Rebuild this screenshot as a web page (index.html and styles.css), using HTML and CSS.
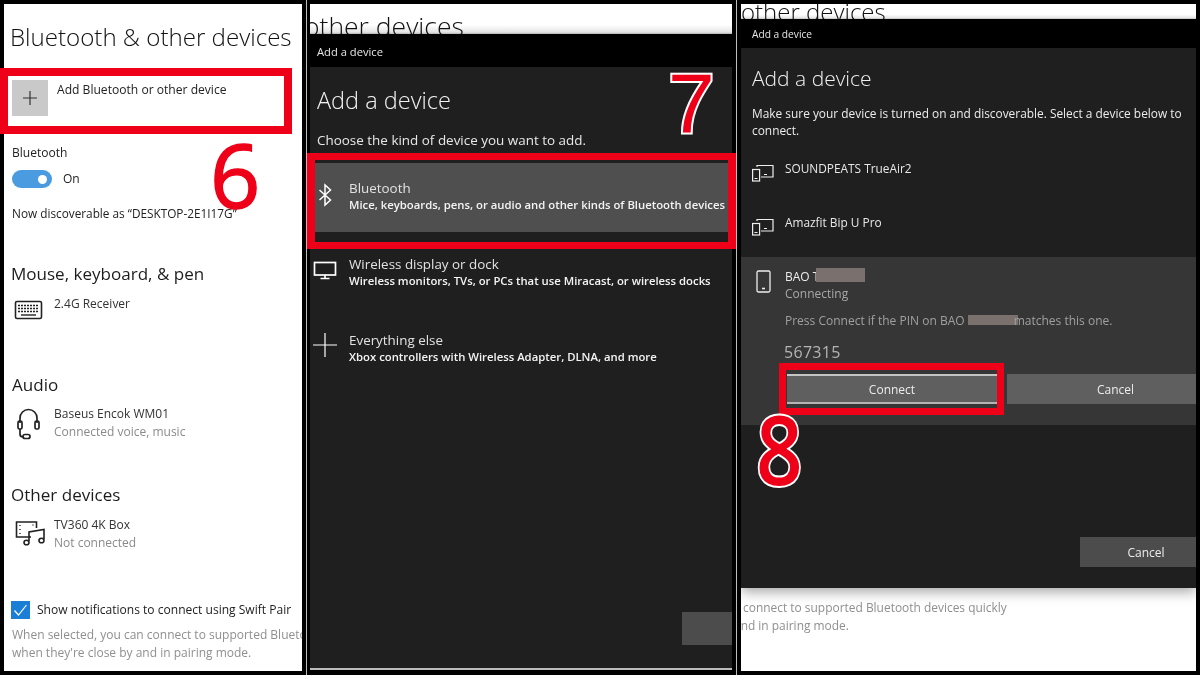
FILE: index.html
```html
<!DOCTYPE html>
<html lang="en">
<head>
<meta charset="utf-8">
<title>Add a Bluetooth device</title>
<link rel="stylesheet" href="styles.css">
</head>
<body>
<main class="stage">
  <section class="panel settings">
    <h1 class="title">Bluetooth &amp; other devices</h1>
    <div class="add-row">
      <span class="plus-tile"><svg class="ico" width="18" height="18" viewBox="0 0 18 18"><path d="M9 2v14M2 9h14" stroke="#333" stroke-width="1.2" fill="none"/></svg></span>
      <span class="add-label">Add Bluetooth or other device</span>
    </div>
    <p class="label bt-label">Bluetooth</p>
    <div class="toggle-row"><span class="toggle"><span class="knob"></span></span><span class="label">On</span></div>
    <p class="label disc">Now discoverable as “DESKTOP-2E1I17G”</p>

    <h2 class="heading mouse">Mouse, keyboard, &amp; pen</h2>
    <div class="device dev-mouse">
      <svg class="dev-icon" width="30" height="22" viewBox="0 0 30 22" fill="none" stroke="#222"><rect x="1.500" y="3.500" width="26" height="17" rx="1.500" stroke-width="1.600"/><path d="M4 7.500h21M4 10.500h21M4 13.500h21" stroke-width="1.600" stroke-dasharray="2 1"/><path d="M7 17h15" stroke-width="1.400"/></svg>
      <div class="dev-text"><span class="dev-name">2.4G Receiver</span></div>
    </div>

    <h2 class="heading audio">Audio</h2>
    <div class="device dev-audio">
      <svg class="dev-icon" width="30" height="32" viewBox="0 0 30 32" fill="none" stroke="#222" stroke-width="1.700"><path d="M6 15V10a8.500 8.500 0 0 1 17 0v5"/><rect x="4" y="13" width="4" height="8" rx="1.500"/><rect x="21" y="13" width="4" height="8" rx="1.500"/><path d="M6 21v5c0 2 1 3 3 3"/><rect x="9" y="26.500" width="7" height="4" rx="2"/></svg>
      <div class="dev-text"><span class="dev-name">Baseus Encok WM01</span><span class="dev-sub">Connected voice, music</span></div>
    </div>

    <h2 class="heading other">Other devices</h2>
    <div class="device dev-other">
      <svg class="dev-icon" width="32" height="28" viewBox="0 0 32 28" fill="none" stroke="#222" stroke-width="1.600"><path d="M16 18H1.500V3h20v6"/><path d="M5 6v1M5 10v1M5 14v1M18 5.500v1" stroke-width="1.400"/><path d="M14 22V13l15-2.500V20"/><ellipse cx="11.500" cy="23.500" rx="2.500" ry="2.300"/><ellipse cx="26.500" cy="21.500" rx="2.500" ry="2.300"/></svg>
      <div class="dev-text"><span class="dev-name">TV360 4K Box</span><span class="dev-sub">Not connected</span></div>
    </div>

    <div class="check-row">
      <span class="check"><svg width="19" height="18" viewBox="0 0 19 18" fill="none"><path d="M3.500 9.500l4 4.500 8-10" stroke="#fff" stroke-width="1.200"/></svg></span>
      <span class="label check-label">Show notifications to connect using Swift Pair</span>
    </div>
    <p class="note">When selected, you can connect to supported Bluetooth devices quickly<br>when they're close by and in pairing mode.</p>

    <div class="mark mark-add"></div>
    <span class="digit digit-six">6</span>
  </section>

  <div class="rule"></div>

  <section class="panel choose">
    <div class="strip strip-tall"><span class="strip-text">other devices</span></div>
    <div class="titlebar bar-tall">Add a device</div>
    <div class="dialog dialog-choose">
      <h2 class="dlg-title">Add a device</h2>
      <p class="dlg-lead">Choose the kind of device you want to add.</p>
      <div class="kind kind-active">
        <svg class="kind-icon" width="24" height="24" viewBox="0 0 24 24" fill="none" stroke="#fff" stroke-width="1.500"><path d="M6.500 7l11 10-5.500 5V2l5.500 5-11 10"/></svg>
        <div class="kind-text"><span class="kind-name">Bluetooth</span><span class="kind-sub">Mice, keyboards, pens, or audio and other kinds of Bluetooth devices</span></div>
      </div>
      <div class="kind kind-display">
        <svg class="kind-icon" width="24" height="19" viewBox="0 0 24 19" fill="none" stroke="#fff" stroke-width="1.700"><rect x="1.500" y="1.500" width="21" height="12.500"/><path d="M12 14v3M7.500 17.500h9"/></svg>
        <div class="kind-text"><span class="kind-name">Wireless display or dock</span><span class="kind-sub">Wireless monitors, TVs, or PCs that use Miracast, or wireless docks</span></div>
      </div>
      <div class="kind kind-else">
        <svg class="kind-icon" width="24" height="24" viewBox="0 0 24 24" fill="none" stroke="#fff" stroke-width="1.200"><path d="M12 0v24M0 12h24"/></svg>
        <div class="kind-text"><span class="kind-name">Everything else</span><span class="kind-sub">Xbox controllers with Wireless Adapter, DLNA, and more</span></div>
      </div>
      <div class="foot foot-choose"><span class="btn-blank"></span></div>
    </div>
    <div class="mark mark-kind"></div>
    <span class="digit digit-seven">7</span>
  </section>

  <div class="rule"></div>

  <section class="panel pair">
    <div class="strip strip-short"><span class="strip-text">other devices</span></div>
    <div class="titlebar bar-short">Add a device</div>
    <div class="dialog dialog-pair">
      <h2 class="pair-title">Add a device</h2>
      <p class="pair-lead">Make sure your device is turned on and discoverable. Select a device below to connect.</p>
      <div class="found found-first">
        <svg class="found-icon" width="22" height="18" viewBox="0 0 22 18" fill="none" stroke="#eee" stroke-width="1.200"><path d="M5 3V1.500h16v11.500H9"/><rect x=".6" y="5.500" width="7" height="11.500"/><path d="M2.500 14.500h3M12 10.500h3"/></svg>
        <span class="found-name">SOUNDPEATS TrueAir2</span>
      </div>
      <div class="found found-second">
        <svg class="found-icon" width="22" height="18" viewBox="0 0 22 18" fill="none" stroke="#eee" stroke-width="1.200"><path d="M5 3V1.500h16v11.500H9"/><rect x=".6" y="5.500" width="7" height="11.500"/><path d="M2.500 14.500h3M12 10.500h3"/></svg>
        <span class="found-name">Amazfit Bip U Pro</span>
      </div>
      <div class="pairing">
        <svg class="phone" width="15" height="23" viewBox="0 0 15 23" fill="none" stroke="#eee" stroke-width="1.300"><rect x="1" y="1" width="13" height="21" rx="1.500"/><path d="M6 18.500h3" stroke-width="1.600"/></svg>
        <div class="pair-body">
          <span class="pair-name">BAO T<span class="redact redact-name"></span></span>
          <span class="pair-status">Connecting</span>
          <p class="pair-hint">Press Connect if the PIN on BAO <span class="redact redact-hint"></span>matches this one.</p>
          <p class="pin">567315</p>
        </div>
        <div class="pair-actions">
          <span class="btn btn-connect">Connect</span>
          <span class="btn btn-cancel">Cancel</span>
        </div>
      </div>
      <div class="foot foot-pair"><span class="btn btn-foot">Cancel</span></div>
    </div>
    <p class="behind">connect to supported Bluetooth devices quickly<br><span class="behind-cut">and in pairing mode.</span></p>
    <div class="mark mark-connect"></div>
    <span class="digit digit-eight">8</span>
  </section>
</main>
</body>
</html>
```

FILE: styles.css
```css
* { box-sizing: border-box; }
html, body { margin: 0; padding: 0; background: #000; }
body { width: 1200px; height: 675px; overflow: hidden; font-family: "Open Sans", "Noto Sans", sans-serif; }
p, h1, h2 { margin: 0; font-weight: 400; }

.stage { display: flex; width: 1200px; height: 675px; padding: 0 4px; background: #000; filter: blur(.35px); }
.rule { width: 1px; height: 675px; margin: 0 4px; background: #bdbdbd; flex: none; }
.rule:nth-of-type(1) { margin-right: 3px; }
.panel { position: relative; margin: 4px 0; height: 667px; background: #fff; color: #1c1c1c; }
.settings { width: 298px; padding-left: 8px; }
.choose { width: 422px; background: #000; }
.pair { width: 455px; overflow: hidden; }

/* settings panel */
.title { margin: 16px 0 0 -2px; font-size: 24.100px; line-height: 34px; font-weight: 300; white-space: nowrap; color: #111; }
.add-row { display: flex; align-items: flex-start; gap: 9px; margin-top: 26px; }
.plus-tile { display: flex; align-items: center; justify-content: center; width: 36px; height: 36px; background: #c9c9c9; }
.add-label { font-size: 12.100px; line-height: 20px; color: #222; }
.label { font-size: 12.050px; line-height: 18px; color: #222; white-space: nowrap; }
.bt-label { margin-top: 28px; }
.toggle-row { display: flex; align-items: center; gap: 11px; margin-top: 8px; height: 18px; }
.toggle { display: flex; align-items: center; justify-content: flex-end; width: 40px; height: 18px; padding-right: 5px; border-radius: 9px; background: #4a9be0; }
.knob { width: 9px; height: 9px; border-radius: 50%; background: #fff; }
.disc { margin-top: 16px; font-size: 11.800px; }
.heading { margin-left: -1px; font-size: 17.050px; line-height: 28px; color: #1c1c1c; white-space: nowrap; }
.mouse { margin-top: 38px; }
.audio { margin-top: 58px; margin-left: 0; }
.other { margin-top: 40px; }
.device { display: flex; }
.dev-icon { flex: none; margin-top: 3px; }
.dev-text { display: flex; flex-direction: column; }
.dev-name { font-size: 12px; line-height: 18px; color: #333; white-space: nowrap; }
.dev-sub { font-size: 12px; line-height: 18px; color: #8a8a8a; white-space: nowrap; }
.dev-mouse { height: 18px; margin: 7px 0 0 2px; }
.dev-mouse .dev-icon { margin-right: 10px; }
.dev-audio { margin: 6px 0 0 2px; }
.dev-audio .dev-icon { margin-right: 10px; }
.dev-other { margin: 7px 0 0 3px; }
.dev-other .dev-icon { margin-right: 7px; }
.check-row { display: flex; align-items: center; gap: 7px; height: 18px; margin: 49px 0 0 -1px; }
.check { display: flex; width: 19px; height: 18px; background: #1a7ed6; }
.check-label { line-height: 18px; }
.note { margin-top: 7px; width: 290px; overflow: hidden; font-size: 12px; line-height: 17.500px; color: #8f8f8f; white-space: nowrap; }

/* window fragments */
.strip { position: relative; overflow: hidden; background: linear-gradient(#fff 70%, #e4e4e4 94%, #b0b0b0); }
.strip-tall { height: 30px; }
.strip-short { height: 15px; }
.strip-text { display: block; line-height: 34px; font-weight: 300; white-space: nowrap; color: #111; }
.strip-tall .strip-text { margin: 5px 0 0 -6px; font-size: 26.500px; }
.strip-short .strip-text { margin: -9px 0 0 0; font-size: 24px; }
.titlebar { background: #000; color: #e6e6e6; white-space: nowrap; }
.bar-tall { height: 33px; padding-left: 7px; font-size: 11.200px; line-height: 35px; }
.bar-short { height: 29px; padding-left: 11px; font-size: 10.200px; line-height: 31px; }
.dialog { background: #1f1f1f; color: #f0f0f0; }

/* choose dialog */
.dialog-choose { display: flex; flex-direction: column; height: 603px; border-bottom: 2px solid #bbb; padding-left: 7px; }
.dlg-title { margin-top: 16px; font-size: 23.500px; line-height: 34px; font-weight: 300; color: #f2f2f2; }
.dlg-lead { margin-top: 12px; font-size: 13.450px; line-height: 22px; color: #e8e8e8; white-space: nowrap; }
.kind { display: flex; flex: none; align-items: flex-start; white-space: nowrap; }
.kind-text { display: flex; flex-direction: column; }
.kind-name { font-size: 13.400px; line-height: 18px; color: #e2e2e2; }
.kind-sub { font-size: 11.320px; line-height: 16px; font-weight: 600; color: #f4f4f4; }
.kind-icon { flex: none; }
.kind-active { width: 413px; height: 69px; margin: 12px 0 0 -2px; padding: 16px 0 0 4px; background: #4f4f4f; }
.kind-active .kind-icon { margin: 4px 6px 0 -6px; }
.kind-active .kind-text { margin-left: 6px; }
.kind-display { margin: 23px 0 0 -4px; height: 40px; }
.kind-display .kind-icon { margin: 6px 12px 0 0; }
.kind-else { margin: 36px 0 0 -4px; height: 40px; }
.kind-else .kind-icon { margin: 2px 12px 0 0; }
.foot { display: flex; flex: none; justify-content: flex-end; }
.foot-choose { margin: 241px 0 0 0; }
.btn-blank { width: 50px; height: 33px; background: #4c4c4c; }

/* pair dialog */
.dialog-pair { display: flex; flex-direction: column; height: 540px; box-shadow: 0 4px 12px rgba(0,0,0,.35); position: relative; }
.pair-title { margin: 14px 0 0 11px; font-size: 21px; line-height: 32px; font-weight: 300; }
.pair-lead { margin: 11px 8px 0 11px; font-size: 11.900px; line-height: 17px; color: #ececec; }
.found { display: flex; flex: none; align-items: flex-start; margin-left: 11px; }
.found-icon { flex: none; margin-top: 5px; margin-right: 11px; }
.found-name { font-size: 11.850px; line-height: 18px; color: #e8e8e8; white-space: nowrap; }
.found-first { margin-top: 20px; }
.found-second { margin-top: 31px; }
.pairing { position: relative; display: flex; flex: none; flex-wrap: wrap; align-content: flex-start; height: 168px; margin-top: 21px; background: #363636; }
.phone { flex: none; margin: 13px 14px 0 15px; }
.pair-body { display: flex; flex-direction: column; padding-top: 11px; }
.pair-name { display: flex; font-size: 12px; line-height: 18px; color: #ececec; white-space: nowrap; }
.pair-status { margin-top: -1px; font-size: 12px; line-height: 18px; color: #a8a8a8; }
.pair-hint { margin-top: 9px; font-size: 12px; line-height: 18px; color: #a0a0a0; white-space: nowrap; }
.pin { margin: 11px 0 0 -1px; font-size: 16px; line-height: 22px; color: #b4b4b4; letter-spacing: .3px; }
.redact { display: inline-block; background: #7a706e; }
.redact-name { width: 49px; height: 14px; margin: 0 0 0 -3px; }
.redact-hint { width: 50px; height: 10px; margin-right: -4px; }
.pair-actions { display: flex; gap: 10px; width: 100%; height: 30px; margin: 11px 0 0 46px; }
.btn { display: flex; align-items: center; justify-content: center; font-size: 12px; color: #ececec; background: #5f5f5f; }
.btn-connect { width: 210px; border-top: 2px solid #c4c4c4; border-bottom: 2px solid #b4b4b4; }
.btn-cancel { width: 189px; padding-left: 28px; }
.foot-pair { margin-top: 112px; }
.btn-foot { width: 116px; height: 30px; padding-left: 16px; background: #4c4c4c; }
.behind { margin: 11px 0 0 2px; font-size: 11.950px; line-height: 18px; color: #8f8f8f; white-space: nowrap; }
.behind-cut { display: inline-block; margin-left: -9px; }

/* red annotations, laid over the screenshots */
.mark { position: absolute; border: 7px solid #ee0018; }
.mark-add { left: -4px; top: 64px; width: 292px; height: 66px; border-width: 8px; }
.mark-kind { left: -3px; top: 149px; width: 429px; height: 96px; border-width: 7px 8px; }
.mark-connect { left: 38px; top: 359px; width: 225px; height: 52px; }
.digit { position: absolute; font-family: "Liberation Sans", sans-serif; color: #ee0018; }
.digit-six { left: 206px; top: 137px; font-size: 88px; line-height: 66px; font-family: "Open Sans", sans-serif; -webkit-text-stroke: 1.500px #ee0018; }
.digit-seven { left: 358px; top: 57px; font-size: 84px; line-height: 84px; -webkit-text-stroke: 4px #fff; paint-order: stroke fill; }
.digit-eight { left: 15px; top: 396px; font-size: 96px; line-height: 96px; font-family: "Open Sans", sans-serif; font-weight: 600; -webkit-text-stroke: 4px #fff; paint-order: stroke fill; transform: scaleX(.85); transform-origin: left top; }
```
